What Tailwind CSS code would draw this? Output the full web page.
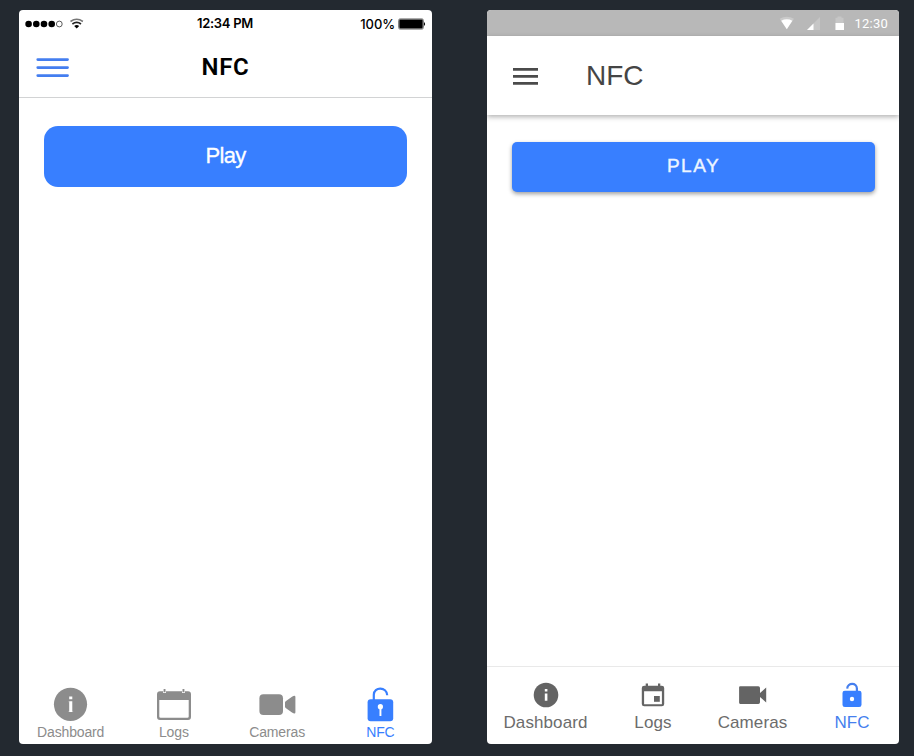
<!DOCTYPE html>
<html lang="en">
<head>
<meta charset="utf-8">
<title>NFC</title>
<script src="https://cdn.jsdelivr.net/npm/@tailwindcss/browser@4"></script>
</head>
<body class="w-[914px] h-[756px] overflow-hidden bg-[#232930] font-['Liberation_Sans',Arial,sans-serif] flex items-start pt-[10px] pl-[19px] gap-[55px]">

<!-- iOS -->
<section class="w-[413px] h-[734px] shrink-0 bg-white rounded-[4px] overflow-hidden flex flex-col">
  <div class="h-[28px] shrink-0 grid grid-cols-3 items-center px-[6px] font-['Inter',sans-serif] text-black">
    <svg class="w-[62px] h-[28px]" viewBox="0 0 62 28">
      <circle cx="3.6" cy="14" r="3.3"/><circle cx="11.3" cy="14" r="3.3"/><circle cx="19" cy="14" r="3.3"/><circle cx="26.7" cy="14" r="3.3"/>
      <circle cx="34.3" cy="14" r="2.9" fill="none" stroke="#333" stroke-width=".8"/>
      <g fill="none" stroke="#222" stroke-width="1.6"><path d="M45.5 11.5Q51.7 7.1 57.9 11.5" stroke="#777"/><path d="M47.4 14Q51.7 10.7 56 14"/></g>
      <path d="M49.2 15.9Q51.7 14.2 54.2 15.9L51.7 18.4Z"/>
    </svg>
    <span class="text-[13px] leading-[27px] pb-px pr-px font-semibold text-center whitespace-nowrap tracking-[-0.3px] -mr-[12px] -ml-[12px]">12:34 PM</span>
    <div class="flex items-center justify-end gap-[3px]">
      <span class="text-[13px] leading-[28px] font-medium tracking-[-0.1px]">100%</span>
      <svg class="w-[28px] h-[12px]" viewBox="0 0 28 12"><rect x=".6" y=".9" width="24.8" height="10.2" rx="1.5" fill="#fff" stroke="#777" stroke-width="1"/><rect x="1.3" y="1.6" width="23.4" height="8.8" rx=".8"/><path d="M26 4Q28.2 6 26 8Z"/></svg>
    </div>
  </div>
  <header class="h-[60px] shrink-0 border-b border-[#d2d3d4] grid grid-cols-[60px_1fr_60px] items-start">
    <svg class="ml-[17px] mt-[20px] w-[34px] h-[20px]" viewBox="0 0 34 20" stroke="#447ef0" stroke-width="2.6" stroke-linecap="round"><path d="M1.7 1.6H31.6M1.7 9.6H31.6M1.7 17.6H31.6"/></svg>
    <h1 class="text-center font-['Roboto',sans-serif] font-semibold text-[24px] tracking-[0.7px] leading-[58px] text-black">NFC</h1>
  </header>
  <main class="flex-1 px-[25px] pt-[28px]">
    <button class="w-full h-[61px] rounded-[14px] bg-[#387fff] text-white text-[22px] tracking-[-0.7px] leading-[60px] pb-px [-webkit-text-stroke:0.3px_white]">Play</button>
  </main>
  <nav class="h-[58px] shrink-0 grid grid-cols-4 text-[14px] leading-[16px] text-[#8c8c8c] tracking-[-0.15px]">
    <a class="flex flex-col items-center">
      <svg class="w-[36px] h-[36px]" viewBox="0 0 36 36"><circle cx="17.5" cy="18.3" r="16.6" fill="#8c8c8c"/><path fill="#fff" d="M16.2 10.6h3.1v2.7h-3.1zM16.2 15.2h3.1v10.9h-3.1z"/><path fill="#fff" opacity=".25" d="M15.2 15.2h1v1h-1zM15.2 25.1h5v1h-5z"/></svg>
      <span class="mt-[2px]">Dashboard</span>
    </a>
    <a class="flex flex-col items-center">
      <svg class="w-[36px] h-[36px]" viewBox="0 0 36 36"><path fill="#8c8c8c" fill-rule="evenodd" d="M4 5.2H7.1V7H10V5.2H26V7H28.9V5.2H32Q35 5.2 35 8.2V31Q35 34 32 34H4Q1 34 1 31V8.2Q1 5.2 4 5.2ZM3.3 14V30.4Q3.3 31.7 4.6 31.7H31.4Q32.7 31.7 32.7 30.4V14Z"/><path fill="#8c8c8c" d="M7.6 3h1.9v3.3H7.6zM26.5 3h1.9v3.3h-1.9z"/></svg>
      <span class="mt-[2px]">Logs</span>
    </a>
    <a class="flex flex-col items-center">
      <svg class="w-[38px] h-[36px]" viewBox="0 0 38 36" fill="#8c8c8c"><rect x="1.4" y="8.2" width="23.6" height="20.8" rx="4"/><path d="M27 16.5Q27 15.5 28 15L34 10.7Q37.4 8.7 37.4 11V26.2Q37.4 28.4 34 26.5L28 22.3Q27 21.7 27 20.8Z"/></svg>
      <span class="mt-[2px]">Cameras</span>
    </a>
    <a class="flex flex-col items-center text-[#387fff]">
      <svg class="w-[36px] h-[36px]" viewBox="0 0 36 36"><path d="M11.8 14V8.7C11.8 .4 24.8 .4 25.2 9.2" fill="none" stroke="#387fff" stroke-width="2.2"/><rect x="5.6" y="13.3" width="25.6" height="22" rx="3" fill="#387fff"/><circle cx="18.4" cy="20.7" r="2.6" fill="#fff"/><path d="M17.5 22h1.9v8h-1.9z" fill="#fff"/></svg>
      <span class="mt-[2px]">NFC</span>
    </a>
  </nav>
</section>

<!-- Android -->
<section class="w-[412px] h-[734px] shrink-0 bg-white rounded-[4px] overflow-hidden flex flex-col">
  <div class="h-[26px] shrink-0 bg-[#b8b8b8] flex items-center justify-end pr-[11px] gap-[9px]">
    <svg class="w-[66px] h-[26px]" viewBox="0 0 66 26" fill="#fff"><path opacity=".25" d="M.6 8.8Q7.8 4.8 15 8.8L7.8 19Z"/><path d="M2.2 10.7Q7.8 8 13.4 10.7L7.8 19.3Z"/><path opacity=".2" d="M41 7V20H28Z"/><path d="M34.5 13.5V20H28Z"/><path opacity=".2" d="M56.5 7.8h2V6.5h4v1.3h2V20h-8z"/><path d="M56.5 13h8.5v7h-8.5z"/></svg>
    <span class="font-['Roboto',sans-serif] text-[13px] leading-[27px] tracking-[0.25px] text-white">12:30</span>
  </div>
  <header class="h-[79px] shrink-0 flex items-start pl-[26px] gap-[47px] shadow-[0_2px_5px_rgba(0,0,0,0.3)]">
    <svg class="mt-[31px] w-[26px] h-[18px]" viewBox="0 0 26 18" fill="#4b4b4b"><path d="M0 1h25v2.8H0zM0 8h25v2.7H0zM0 15h25v2.8H0z"/></svg>
    <h1 class="text-[28px] leading-[80px] text-[#454545]">NFC</h1>
  </header>
  <main class="flex-1 px-[25px] pt-[27px]">
    <button class="w-[363px] h-[50px] rounded-[5px] bg-[#387fff] text-[#edf5ff] text-[19px] leading-[48px] pb-[2px] tracking-[1.5px] [-webkit-text-stroke:0.4px_#edf5ff] shadow-[0_2px_4px_rgba(0,0,0,0.38)]">PLAY</button>
  </main>
  <nav class="h-[78px] shrink-0 border-t border-[#e9e9e9] grid grid-cols-[117px_98px_101px_98px] text-[17px] leading-[20px] tracking-[0.1px] text-[#6c6c6c] pt-[13px]">
    <a class="flex flex-col items-center">
      <svg class="w-[30px] h-[30px]" viewBox="0 0 30 30"><circle cx="15" cy="15" r="12.3" fill="#646464"/><path fill="#fff" d="M13.8 9h2.6v2.6h-2.6zM13.8 13.6h2.6v7.2h-2.6z"/></svg>
      <span class="mt-[3px]">Dashboard</span>
    </a>
    <a class="flex flex-col items-center">
      <svg class="w-[30px] h-[30px]" viewBox="0 0 30 30" fill="#646464"><path fill-rule="evenodd" d="M6.2 5.7H7.7V3.6H10V5.7H20V3.6H22.3V5.7H23.8Q26.2 5.7 26.2 8V24Q26.2 26.3 23.8 26.3H6.2Q3.8 26.3 3.8 24V8Q3.8 5.7 6.2 5.7ZM6.1 11.2V24.2H23.9V11.2Z"/><path d="M16 16h5.8v5.8H16z"/></svg>
      <span class="mt-[3px]">Logs</span>
    </a>
    <a class="flex flex-col items-center">
      <svg class="w-[30px] h-[30px]" viewBox="0 0 30 30" fill="#646464"><path d="M2.2 6.2H20.3Q22 6.2 22 7.9V12.9L28.2 7.5V22.5L22 17V22.2Q22 23.9 20.3 23.9H2.2Q1.1 23.9 1.1 22.8V7.3Q1.1 6.2 2.2 6.2Z"/></svg>
      <span class="mt-[3px]">Cameras</span>
    </a>
    <a class="flex flex-col items-center text-[#467fee]">
      <svg class="w-[30px] h-[30px]" viewBox="0 0 30 30"><path d="M10.2 8.6C10.6 2.4 19.9 2.4 19.9 8.6V12" fill="none" stroke="#467fee" stroke-width="2.2"/><rect x="5.5" y="10.8" width="19" height="16.3" rx="2.3" fill="#387fff"/><circle cx="15" cy="19" r="2.2" fill="#fff"/></svg>
      <span class="mt-[3px]">NFC</span>
    </a>
  </nav>
</section>
</body>
</html>
